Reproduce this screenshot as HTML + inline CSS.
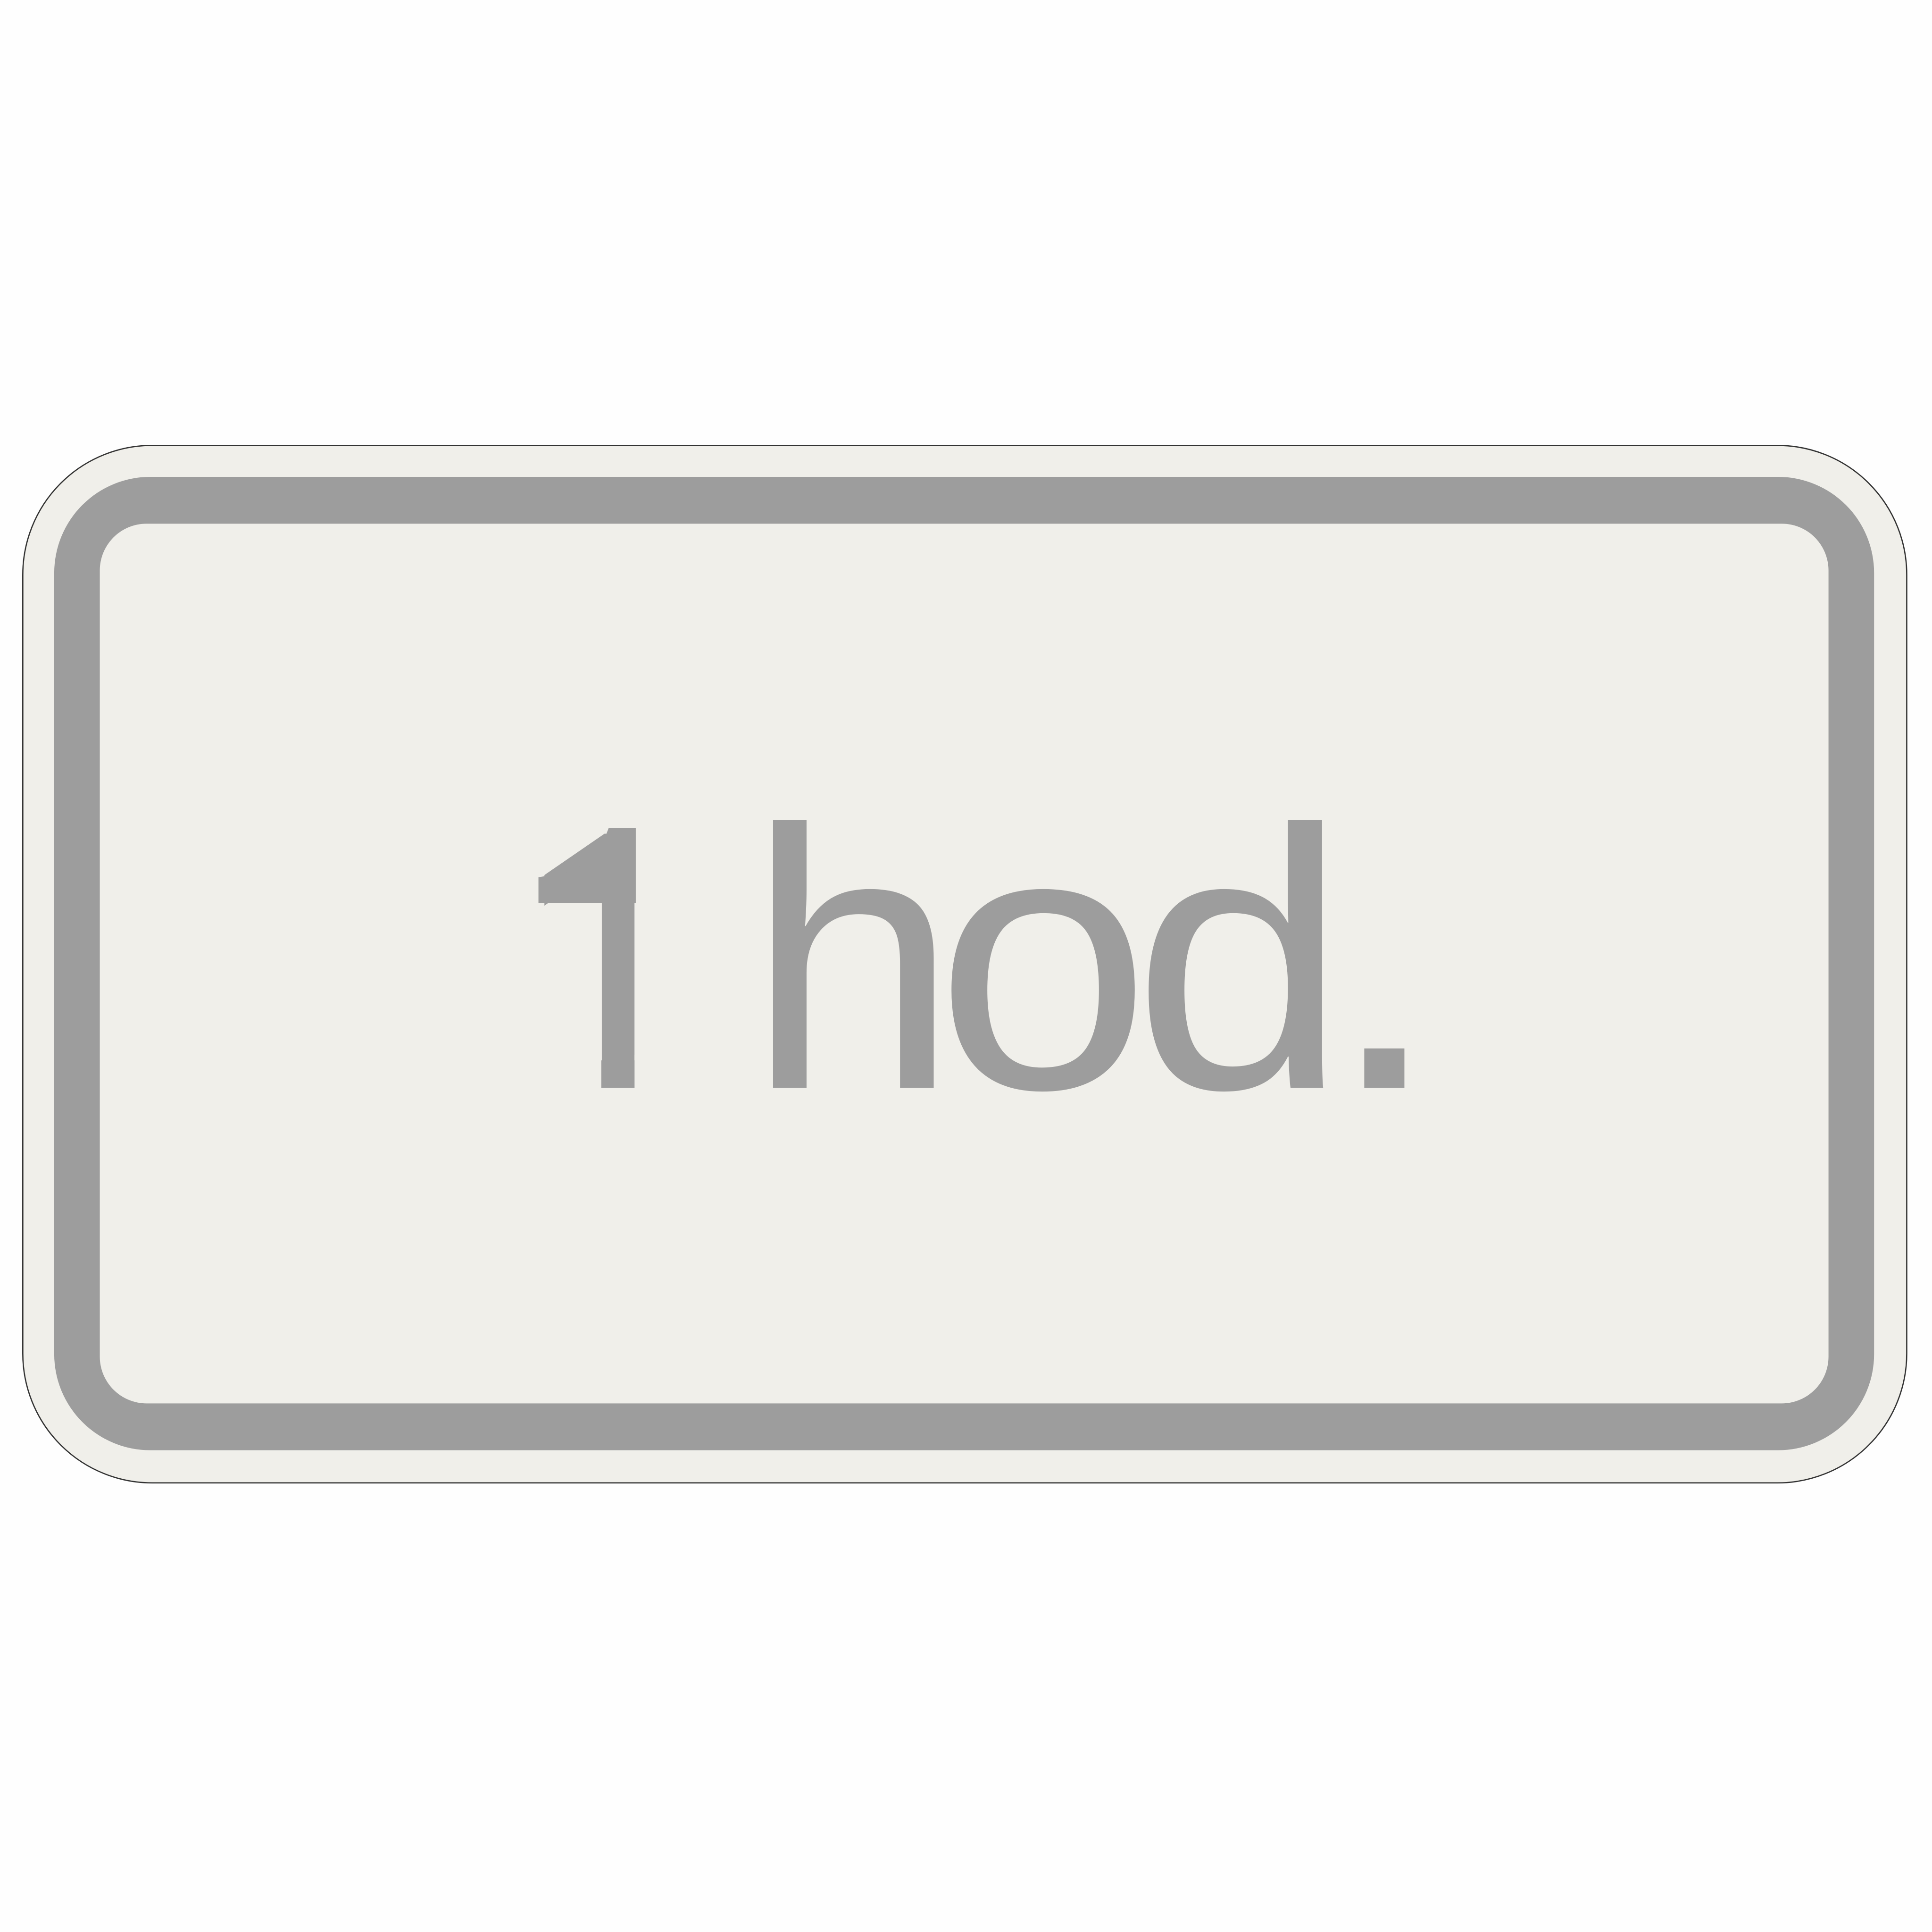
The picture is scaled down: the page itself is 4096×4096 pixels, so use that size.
<!DOCTYPE html>
<html><head><meta charset="utf-8"><style>html,body{margin:0;padding:0;background:#fff}svg{display:block}</style></head>
<body>
<svg width="4096" height="4096" viewBox="0 0 1568 1568" xmlns="http://www.w3.org/2000/svg">
<rect x="0" y="0" width="1568" height="1568" fill="#fefefe"/>
<rect x="18.5" y="361.5" width="1529" height="842" rx="105" ry="105" fill="#f0efea" stroke="#333" stroke-width="1"/>
<rect x="44" y="387" width="1477" height="790" rx="78" ry="78" fill="#9d9d9d"/>
<rect x="81" y="425" width="1403" height="714" rx="38" ry="38" fill="#f0efea"/>
<g font-family="Liberation Sans, sans-serif" font-size="300" fill="#9d9d9d">
<text transform="translate(413,883)">1</text>
<text transform="translate(606,883) scale(1.03,1)">h</text>
<text transform="translate(759,883) scale(1.05,1)">o</text>
<text transform="translate(919,883) scale(1.05,1)">d</text>
<text transform="translate(1076,883) scale(1.14,1)">.</text>
</g>
<rect x="425" y="856" width="63" height="32" fill="#f0efea"/>
<rect x="515" y="856" width="57" height="32" fill="#f0efea"/>
<polygon points="437,712 460,708 478,700 487,690 494,672 516,672 516,733 437,733" fill="#9d9d9d"/>
</svg>
</body></html>
